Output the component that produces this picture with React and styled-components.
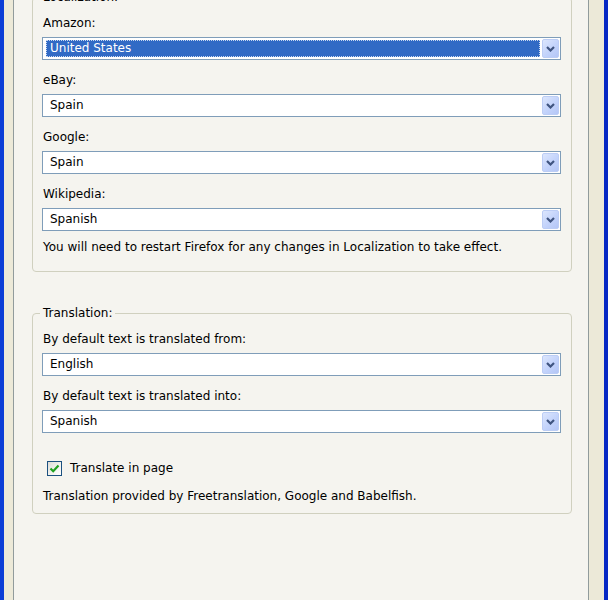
import React from "react";
import styled, { createGlobalStyle } from "styled-components";

const GlobalStyle = createGlobalStyle`
  html, body {
    margin: 0;
    height: 100%;
    overflow: hidden;
  }
  body {
    font-family: "DejaVu Sans", Tahoma, sans-serif;
    font-size: 12px;
    color: #000;
  }
`;

const Frame = styled.div`
  display: flex;
  height: 100vh;
  box-sizing: border-box;
  background: #ece9d8;
  border-left: 4px solid #0b3ed6;
  border-right: 4px solid #0628c4;
  padding: 0 15px 0 9px;
`;

const TabPanel = styled.div`
  flex: 1;
  background: #f5f4ef;
  border-left: 1px solid #919b9c;
  border-right: 1px solid #919b9c;
  padding: 0 16px 0 18px;
  overflow: hidden;
`;

const Group = styled.fieldset`
  margin: ${(p) => p.$top}px 0 0 0;
  padding: 11px 10px ${(p) => p.$bottom}px 9px;
  border: 1px solid #d0d0bf;
  border-radius: 4px;
  min-width: 0;
`;

const Legend = styled.legend`
  padding: 0 3px;
  margin-left: -2px;
  line-height: 15px;
  font-size: 12px;
`;

const Field = styled.div`
  & + & {
    margin-top: 13px;
  }
`;

const Label = styled.div`
  line-height: 15px;
  padding-left: 1px;
  margin-bottom: 6px;
  white-space: nowrap;
`;

const Combo = styled.div`
  display: flex;
  align-items: stretch;
  height: 23px;
  box-sizing: border-box;
  border: 1px solid #7f9db9;
  background: #fff;
  padding: 1px;
`;

const ComboValue = styled.div`
  flex: 1;
  display: flex;
  align-items: center;
  margin: 1px 2px 1px 2px;
  padding-left: 4px;
  line-height: 15px;
  color: ${(p) => (p.$selected ? "#fff" : "#000")};
  background: ${(p) => (p.$selected ? "#316ac5" : "transparent")};
  outline: ${(p) => (p.$selected ? "1px dotted #c8d8f0" : "none")};
  outline-offset: -1px;
`;

const ComboButton = styled.div`
  width: 17px;
  display: flex;
  align-items: center;
  justify-content: center;
  box-sizing: border-box;
  border: 1px solid #bccdf5;
  border-radius: 2px;
  background: linear-gradient(135deg, #dce6fd 0%, #c3d3fb 55%, #b4c6f6 100%);
`;

const Note = styled.div`
  margin-top: ${(p) => p.$top}px;
  line-height: 15px;
  padding-left: 1px;
  white-space: nowrap;
`;

const CheckRow = styled.label`
  display: flex;
  align-items: center;
  gap: 8px;
  height: 15px;
  margin-top: 28px;
  padding-left: 5px;
  line-height: 15px;
`;

const CheckBox = styled.span`
  width: 15px;
  height: 15px;
  box-sizing: border-box;
  border: 1px solid #1c5180;
  background: linear-gradient(135deg, #dcdcd7 0%, #f4f4f0 60%, #ffffff 100%);
  display: flex;
  align-items: center;
  justify-content: center;
`;

const Chevron = () => (
  <svg width="9" height="6" viewBox="0 0 9 6">
    <path d="M1 1 L4.5 4.5 L8 1" fill="none" stroke="#3f5480" strokeWidth="2.2" />
  </svg>
);

const Tick = () => (
  <svg width="11" height="11" viewBox="0 0 11 11">
    <path d="M1.5 5.5 L4.2 8.2 L9.5 2.5" fill="none" stroke="#21a121" strokeWidth="2.2" />
  </svg>
);

const Select = ({ label, value, selected }) => (
  <Field>
    <Label>{label}</Label>
    <Combo>
      <ComboValue $selected={selected}>{value}</ComboValue>
      <ComboButton>
        <Chevron />
      </ComboButton>
    </Combo>
  </Field>
);

const App = () => {
  const sites = [
    { label: "Amazon:", value: "United States", selected: true },
    { label: "eBay:", value: "Spain" },
    { label: "Google:", value: "Spain" },
    { label: "Wikipedia:", value: "Spanish" },
  ];

  return (
    <>
      <GlobalStyle />
      <Frame>
        <TabPanel>
          <Group $top={-10} $bottom={16}>
            <Legend>Localization:</Legend>
            {sites.map((s) => (
              <Select key={s.label} {...s} />
            ))}
            <Note $top={9}>
              You will need to restart Firefox for any changes in Localization to take effect.
            </Note>
          </Group>

          <Group $top={34} $bottom={9}>
            <Legend>Translation:</Legend>
            <Select label="By default text is translated from:" value="English" />
            <Select label="By default text is translated into:" value="Spanish" />
            <CheckRow>
              <CheckBox>
                <Tick />
              </CheckBox>
              Translate in page
            </CheckRow>
            <Note $top={13}>
              Translation provided by Freetranslation, Google and Babelfish.
            </Note>
          </Group>
        </TabPanel>
      </Frame>
    </>
  );
};

export default App;
